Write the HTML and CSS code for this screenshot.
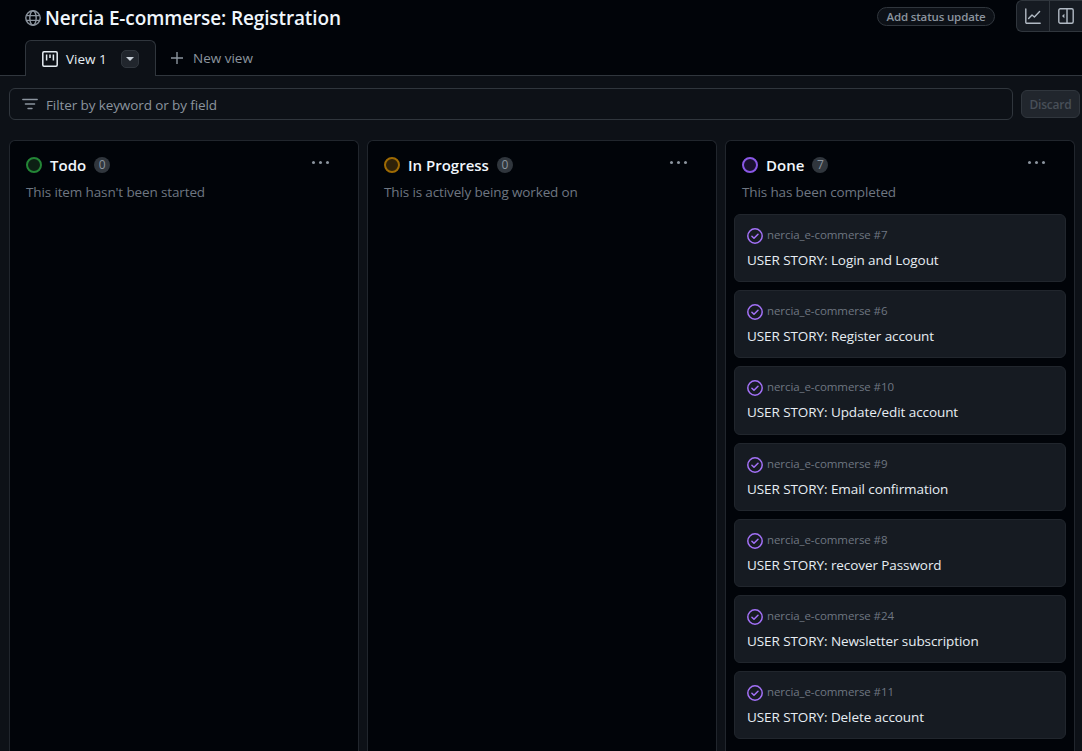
FILE: index.html
```html
<!DOCTYPE html>
<html lang="en">
<head>
    <meta charset="UTF-8">
    <meta name="viewport" content="width=device-width, initial-scale=1.0">
    <title>Nercia E-commerse: Registration</title>
    <link rel="stylesheet" href="styles.css">
</head>
<body>

    <!-- Project header -->
    <header class="top">
        <div class="title-row">
            <div class="title">
                <svg class="globe" width="16" height="16" viewBox="0 0 16 16" fill="none" stroke="#8b949e" stroke-width="1.4">
                    <circle cx="8" cy="8" r="7.2"/>
                    <ellipse cx="8" cy="8" rx="3.2" ry="7.2"/>
                    <path d="M1 5.6h14M1 10.4h14"/>
                </svg>
                <h1>Nercia E-commerse: Registration</h1>
            </div>
            <div class="title-actions">
                <button class="status-btn">Add status update</button>
                <div class="icon-group">
                    <span class="icon-btn">
                        <svg width="16" height="16" viewBox="0 0 16 16" fill="none" stroke="#b1bac4" stroke-width="1.4" stroke-linejoin="round" stroke-linecap="round">
                            <path d="M.8 1v13.2a1 1 0 0 0 1 1h13.4"/>
                            <path d="M3.6 10.6l3.4-3.6 2.4 2 5.2-5.4"/>
                        </svg>
                    </span>
                    <span class="icon-btn">
                        <svg width="16" height="16" viewBox="0 0 16 16" fill="none" stroke="#b1bac4" stroke-width="1.4">
                            <rect x=".8" y=".8" width="14.4" height="14.4" rx="1.5"/>
                            <path d="M9 1v14"/>
                            <path d="M6.4 5.8v4.4L4 8z" fill="#b1bac4" stroke="none"/>
                        </svg>
                    </span>
                </div>
            </div>
        </div>
        <nav class="tabs">
            <div class="tab">
                <svg width="16" height="16" viewBox="0 0 16 16" fill="none" stroke="#e6edf3" stroke-width="1.5">
                    <rect x=".8" y=".8" width="14.4" height="14.4" rx="1.2"/>
                    <path d="M4.6 3.5v6M8 3.5v3.6M11.4 3.5v6"/>
                </svg>
                <span>View 1</span>
                <span class="caret-btn"><i class="caret"></i></span>
            </div>
            <div class="new-view">
                <svg width="12" height="12" viewBox="0 0 12 12" stroke="#8b949e" stroke-width="1.4"><path d="M6 0v12M0 6h12"/></svg>
                <span>New view</span>
            </div>
        </nav>
    </header>

    <!-- Filter -->
    <section class="filter-row">
        <div class="filter">
            <svg width="16" height="16" viewBox="0 0 16 16" stroke="#8b949e" stroke-width="1.4" stroke-linecap="round">
                <path d="M.8 3.5h14.4M3.4 8h9.2M6 12.5h4"/>
            </svg>
            <span class="filter-text">Filter by keyword or by field</span>
        </div>
        <button class="discard">Discard</button>
    </section>

    <!-- Board -->
    <main class="board">
        <section class="column">
            <div class="col-head">
                <i class="dot dot-green"></i>
                <h2>Todo</h2>
                <span class="count">0</span>
                <span class="more"><b></b><b></b><b></b></span>
            </div>
            <p class="col-desc">This item hasn't been started</p>
        </section>

        <section class="column">
            <div class="col-head">
                <i class="dot dot-yellow"></i>
                <h2>In Progress</h2>
                <span class="count">0</span>
                <span class="more"><b></b><b></b><b></b></span>
            </div>
            <p class="col-desc">This is actively being worked on</p>
        </section>

        <section class="column">
            <div class="col-head">
                <i class="dot dot-purple"></i>
                <h2>Done</h2>
                <span class="count">7</span>
                <span class="more"><b></b><b></b><b></b></span>
            </div>
            <p class="col-desc">This has been completed</p>
            <div class="cards" id="cards"></div>
        </section>
    </main>

    <script src="cards.js"></script>
</body>
</html>
```

FILE: cards.js
```js
const items = [
    { num: 7, title: "USER STORY: Login and Logout" },
    { num: 6, title: "USER STORY: Register account" },
    { num: 10, title: "USER STORY: Update/edit account" },
    { num: 9, title: "USER STORY: Email confirmation" },
    { num: 8, title: "USER STORY: recover Password" },
    { num: 24, title: "USER STORY: Newsletter subscription" },
    { num: 11, title: "USER STORY: Delete account" }
];

const cards = document.getElementById("cards");
const closedIcon = '<svg width="16" height="16" viewBox="0 0 16 16" fill="none" stroke="#a371f7" stroke-width="1.5" stroke-linecap="round" stroke-linejoin="round"><circle cx="8" cy="8" r="7.2"/><path d="M4.9 8.2l2.1 2.1 4-4"/></svg>';

items.forEach(item => {
    const card = document.createElement("article");
    card.classList.add("card");
    card.innerHTML = `<div class="card-meta">${closedIcon}<span class="card-repo">nercia_e-commerse #${item.num}</span></div><div class="card-title">${item.title}</div>`;
    cards.appendChild(card);
});
```

FILE: styles.css
```css
* {
    box-sizing: border-box;
}
html, body {
    height: 100%;
}
body {
    margin: 0;
    background-color: #0d1117;
    color: #e6edf3;
    font-family: "Open Sans", "Noto Sans", sans-serif;
    font-size: 13.5px;
    overflow: hidden;
    display: flex;
    flex-direction: column;
}
button {
    font-family: inherit;
}

/* Header */
.top {
    background-color: #010409;
    border-bottom: 1px solid #30363d;
    height: 76px;
    padding-left: 25px;
    display: flex;
    flex-direction: column;
    flex-shrink: 0;
}
.title-row {
    display: flex;
    justify-content: space-between;
    height: 40px;
    flex-shrink: 0;
}
.title {
    display: flex;
    align-items: center;
    gap: 4px;
    height: 36px;
}
.title h1 {
    margin: 0;
    font-size: 19px;
    font-weight: 600;
    letter-spacing: -0.12px;
    color: #f0f6fc;
}
.title-actions {
    display: flex;
    align-items: flex-start;
    gap: 21px;
}
.status-btn {
    margin-top: 7px;
    width: 118px;
    height: 19px;
    padding: 0;
    font-size: 11.5px;
    font-weight: 600;
    letter-spacing: -0.15px;
    color: #8b949e;
    background-color: #0d1117;
    border: 1px solid #30363d;
    border-radius: 10px;
}
.icon-group {
    display: flex;
    height: 32px;
    border: 1px solid #30363d;
    border-right: 0;
    border-radius: 6px 0 0 6px;
    background-color: #161b22;
}
.icon-btn {
    width: 32px;
    display: flex;
    align-items: center;
    justify-content: center;
}
.icon-btn + .icon-btn {
    width: 33px;
    border-left: 1px solid #30363d;
}
.tabs {
    display: flex;
    align-items: stretch;
    height: 36px;
    flex-shrink: 0;
}
.tab {
    width: 131px;
    height: 36px;
    padding-left: 16px;
    display: flex;
    align-items: center;
    gap: 8px;
    background-color: #0d1117;
    border: 1px solid #30363d;
    border-bottom: 0;
    border-radius: 6px 6px 0 0;
    font-weight: 500;
}
.caret-btn {
    width: 18px;
    height: 18px;
    margin-left: auto;
    margin-right: 16px;
    display: flex;
    align-items: center;
    justify-content: center;
    background-color: #21262d;
    border: 1px solid #30363d;
    border-radius: 5px;
}
.caret {
    border: 4px solid transparent;
    border-top-color: #c9d1d9;
    border-bottom: 0;
}
.new-view {
    display: flex;
    align-items: center;
    gap: 10px;
    padding-left: 15px;
    color: #8b949e;
    font-weight: 500;
}

/* Filter */
.filter-row {
    display: flex;
    align-items: center;
    gap: 8px;
    padding: 12px 2px 0 9px;
    flex-shrink: 0;
}
.filter {
    flex: 1;
    height: 32px;
    padding-left: 12px;
    display: flex;
    align-items: center;
    gap: 8px;
    border: 1px solid #30363d;
    border-radius: 6px;
    color: #8b949e;
    letter-spacing: -0.1px;
}
.filter-text {
    padding-top: 1px;
}
.discard {
    width: 59px;
    height: 28px;
    padding: 1px 0 0;
    font-size: 12px;
    font-weight: 600;
    letter-spacing: -0.2px;
    color: #484f58;
    background-color: #21262d;
    border: 1px solid #30363d;
    border-radius: 6px;
}

/* Board */
.board {
    flex: 1;
    min-height: 0;
    display: flex;
    gap: 8px;
    padding: 20px 0 0 9px;
}
.column {
    width: 350px;
    flex-shrink: 0;
    padding: 0 8px;
    background-color: #010409;
    border: 1px solid #21262d;
    border-bottom: 0;
    border-radius: 6px 6px 0 0;
    overflow: hidden;
}
.col-head {
    display: flex;
    align-items: center;
    height: 48px;
    padding: 0 8px;
    position: relative;
}
.col-head h2 {
    margin: 0 8px;
    font-size: 15px;
    font-weight: 600;
    color: #f0f6fc;
}
.dot {
    width: 16px;
    height: 16px;
    border-radius: 50%;
    border: 2px solid;
}
.dot-green {
    border-color: #238636;
    background-color: #0d1f14;
}
.dot-yellow {
    border-color: #9e6a03;
    background-color: #2e2109;
}
.dot-purple {
    border-color: #8957e5;
    background-color: #1a1130;
}
.count {
    width: 16px;
    height: 16px;
    border-radius: 50%;
    background-color: #30363d;
    color: #8b949e;
    font-size: 12px;
    line-height: 16px;
    text-align: center;
}
.more {
    position: absolute;
    top: 20px;
    right: 21px;
    display: flex;
    gap: 4px;
}
.more b {
    width: 3px;
    height: 3px;
    border-radius: 50%;
    background-color: #8b949e;
}
.col-desc {
    margin: 0 8px;
    height: 25px;
    line-height: 6px;
    color: #6e7681;
    letter-spacing: -0.13px;
}
.cards {
    display: flex;
    flex-direction: column;
    gap: 8px;
}
.card {
    height: 68.2px;
    flex-shrink: 0;
    padding: 12px;
    background-color: #161b22;
    border: 1px solid #21262d;
    border-radius: 6px;
}
.card-meta {
    display: flex;
    align-items: center;
    gap: 4px;
    height: 18px;
    font-size: 11.5px;
    letter-spacing: -0.08px;
    color: #6e7681;
}
.card-repo {
    margin-bottom: 3px;
}
.card-title {
    margin-top: 5px;
    line-height: 20px;
    color: #e6edf3;
    letter-spacing: -0.08px;
}
```
